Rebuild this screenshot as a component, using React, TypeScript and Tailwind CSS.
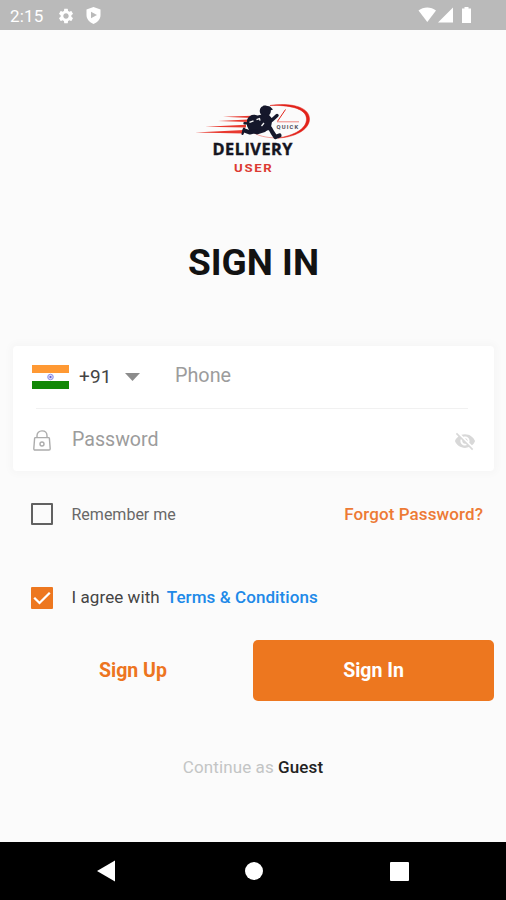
import { useState } from 'react';
import { MdSettings, MdVisibilityOff } from 'react-icons/md';

function StatusBar() {
  return (
    <div className="flex h-[30px] items-center bg-[#bababa] pl-[10px] text-white">
      <span className="w-[47px] pt-[2px] text-[17px] leading-5 tracking-[0.2px]">2:15</span>
      <MdSettings className="mt-[1px] h-[18px] w-[18px]" />
      <svg className="mt-[1px] ml-[11px]" width="15" height="17" viewBox="0 0 15 17">
        <path d="M7.5 0 L14.5 2.5 V8 C14.5 12 11.5 15.5 7.5 17 C3.5 15.5 .5 12 .5 8 V2.5 Z" fill="#fff" />
        <path d="M5 4.8 L11 8 L5 11.2 Z" fill="#bababa" />
      </svg>
      <svg className="ml-auto mr-[33px]" width="55" height="18" viewBox="0 0 55 18">
        <path d="M0.5 4.5 C5.5 0.5 13 0.5 18 4.5 L9.3 16 Z" fill="#fff" />
        <path d="M35 1.5 V16.5 H20 Z" fill="#fff" />
        <path d="M46.5 2.5 V1 H50.5 V2.5 H53 V17 H44 V2.5 Z" fill="#fff" />
      </svg>
    </div>
  );
}

function Logo() {
  return (
    <svg width="130" height="85" viewBox="0 0 130 85">
      {/* speed lines */}
      <g fill="#e8392f">
        <path d="M33 21.8 L62 20.8 V23 Z" />
        <path d="M28 26 L58 24.6 V27 Z" />
        <path d="M15 31.8 L56 29.8 V32.6 Z" />
        <path d="M5 37.4 L54 35 V38.4 Z" />
      </g>
      {/* clock ring */}
      <path
        d="M80 10.5 C98 7.5 119.5 11 119.5 24 C119.5 35 104 42.5 88 43 C104 40.5 116.5 34 116.5 24 C116.5 13 98 9.8 80 10.5 Z"
        fill="#e2231a"
        stroke="#e2231a"
        strokeWidth=".5"
      />
      <path d="M63 37 C68 41 76 42.5 84 42.8" fill="none" stroke="#e2231a" strokeWidth=".7" opacity=".6" />
      <path d="M87.5 26.3 L95.5 14.5" fill="none" stroke="#e2231a" strokeWidth="1" />
      <path d="M87 26.8 H109" fill="none" stroke="#e2231a" strokeWidth=".9" opacity=".6" />
      <text
        x="86.5"
        y="34.3"
        textLength="23"
        lengthAdjust="spacingAndGlyphs"
        className="font-['Roboto'] text-[5px] font-bold tracking-[1px]"
        fill="#50505a"
      >
        QUICK
      </text>
      {/* courier */}
      <g fill="#15172b">
        <circle cx="75.3" cy="16" r="5.6" />
        <path d="M73 10.5 L80 11.4 L83 14.4 L79 16 Z" />
        <path d="M57 25 C58.5 20.5 63 18.5 67.5 20.5 L72 19.5 L79 20 L82.5 24 L81 32 L75 37 L67 39.5 L60 37 L57 31 Z" />
      </g>
      <g fill="none" stroke="#15172b" strokeLinecap="round" strokeLinejoin="round">
        <path d="M78 23 L81.5 25.5 L87 20.5" strokeWidth="3.4" />
        <path d="M72 34 L80 33 L82.5 37.5 L85.5 42 L89.5 40.5" strokeWidth="4.2" />
        <path d="M66 36 L60 37.5 L54.5 35.5" strokeWidth="4" />
        <path d="M54 33.5 L52.5 39" strokeWidth="2.2" />
        <path d="M61 28.5 L54.5 28.2" strokeWidth="2.4" />
      </g>
      <path
        d="M59.5 27.4 L63.5 25.8 M66.5 24.6 L69.5 23.6 L70 25.6 M71.5 31 L74 28"
        fill="none"
        stroke="#f3f3f3"
        strokeWidth="1.3"
      />
      <text
        x="22.5"
        y="60"
        textLength="80.5"
        lengthAdjust="spacingAndGlyphs"
        className="font-['Open_Sans'] text-[16.2px] font-bold tracking-[0.5px]"
        fill="#15151f"
        stroke="#15151f"
        strokeWidth=".4"
      >
        DELIVERY
      </text>
      <text
        x="44"
        y="77.4"
        textLength="39.5"
        lengthAdjust="spacingAndGlyphs"
        className="font-['Roboto'] text-[11.8px] font-bold tracking-[1.5px]"
        fill="#dc3a32"
      >
        USER
      </text>
    </svg>
  );
}

function IndiaFlag() {
  return (
    <svg width="37" height="24" viewBox="0 0 37 24">
      <rect width="37" height="24" fill="#fff" />
      <rect width="37" height="8" fill="#ff9933" />
      <rect y="16" width="37" height="8" fill="#128807" />
      <circle cx="18.5" cy="12" r="2.8" fill="#d4d4fa" stroke="#7d7de0" strokeWidth=".8" />
      <circle cx="18.5" cy="12" r="1.1" fill="#5a5ad0" />
    </svg>
  );
}

function LockIcon() {
  return (
    <svg width="18" height="21" viewBox="0 0 18 21" fill="none" stroke="#acacac" strokeWidth="1.4">
      <path d="M2.4 7.6 H15.6 Q16.3 7.6 16.4 8.4 L17.2 18.8 Q17.2 20 16 20 H2 Q.8 20 .8 18.8 L1.6 8.4 Q1.7 7.6 2.4 7.6 Z" />
      <path d="M4 7.6 V5.8 C4 2.8 6 .9 9 .9 C12 .9 14 2.8 14 5.8 V7.6" />
      <circle cx="9" cy="14" r="2" />
    </svg>
  );
}

function Checkbox({ checked, onChange }: { checked: boolean; onChange: () => void }) {
  return (
    <button
      role="checkbox"
      aria-checked={checked}
      onClick={onChange}
      className={
        checked
          ? 'flex h-[22px] w-[22px] items-center justify-center rounded-[1px] bg-[#ed771f]'
          : 'h-[22px] w-[22px] rounded-[1px] border-2 border-[#616161]'
      }
    >
      {checked && (
        <svg width="18" height="14" viewBox="0 0 18 14">
          <path d="M1.2 6.8 L6.5 12 L16.8 1.8" fill="none" stroke="#fff" strokeWidth="2.3" />
        </svg>
      )}
    </button>
  );
}

export default function App() {
  const [remember, setRemember] = useState(false);
  const [agree, setAgree] = useState(true);

  return (
    <div className="flex h-[900px] w-[506px] flex-col overflow-hidden bg-[#fbfbfb] font-['Roboto',sans-serif]">
      <StatusBar />

      <main className="flex flex-1 flex-col">
        <div className="mt-[65px] flex justify-center pl-1">
          <Logo />
        </div>

        <h1 className="mt-[59px] pl-px text-center text-[37px] leading-[48px] font-bold text-[#121212]">SIGN IN</h1>

        <div className="mt-[59px] mr-3 ml-[13px] h-[125px] rounded-[4px] bg-white shadow-[0_0_7px_4px_rgba(0,0,0,0.018)]">
          <div className="flex h-[62px] items-center pl-[19px]">
            <IndiaFlag />
            <span className="ml-[10px] w-[34px] text-[19px] tracking-[0.2px] text-[#444]">+91</span>
            <svg className="ml-3" width="15" height="8" viewBox="0 0 15 8">
              <path d="M0 0 H15 L7.5 8 Z" fill="#8c8c8c" />
            </svg>
            <input
              type="tel"
              placeholder="Phone"
              className="mb-[2px] ml-[35px] w-[280px] text-[19.8px] outline-none placeholder:text-[#9c9c9c]"
            />
          </div>
          <div className="mr-[26px] ml-[23px] h-px bg-[#f1f1f1]" />
          <div className="flex h-[62px] items-center pl-5">
            <LockIcon />
            <input
              type="password"
              placeholder="Password"
              className="mb-px ml-[21px] w-[360px] text-[19.6px] outline-none placeholder:text-[#9c9c9c]"
            />
            <MdVisibilityOff className="mt-[2px] ml-[22px] h-[22px] w-[22px] text-[#d8d8d8]" />
          </div>
        </div>

        <div className="mt-[31px] mr-[23px] ml-[31px] flex h-6 items-center">
          <Checkbox checked={remember} onChange={() => setRemember(!remember)} />
          <span className="ml-[18.5px] pt-px text-[16px] text-[#686868]">Remember me</span>
          <a className="ml-auto pt-[2px] text-[17px] font-medium tracking-[0.1px] text-[#ed7a35]">Forgot Password?</a>
        </div>

        <div className="mt-[60px] ml-[31px] flex h-6 items-center">
          <Checkbox checked={agree} onChange={() => setAgree(!agree)} />
          <span className="ml-[18.5px] text-[17px] tracking-[0.08px] text-[#444]">I agree with</span>
          <a className="ml-[7px] text-[17px] font-medium tracking-[0.08px] text-[#2089e8]">Terms &amp; Conditions</a>
        </div>

        <div className="mt-[30px] mr-3 ml-[13px] flex h-[61px]">
          <button className="flex-1 pt-px text-[19.5px] font-bold text-[#ed7420]">Sign Up</button>
          <button className="w-[241px] rounded-[5px] bg-[#ed771f] pt-px text-[19.5px] font-bold text-white">Sign In</button>
        </div>

        <p className="mt-[54px] text-center text-[17px] leading-6 tracking-[0.1px] text-[#c3c5c5]">
          Continue as <a className="font-medium text-[#222]">Guest</a>
        </p>
      </main>

      <nav className="flex h-[58px] items-center bg-black">
        <svg className="ml-[97px]" width="18" height="22" viewBox="0 0 18 22">
          <path d="M0 11 L18 0.5 V21.5 Z" fill="#fff" />
        </svg>
        <div className="ml-[129.5px] h-[18px] w-[18px] rounded-full bg-white" />
        <div className="ml-[127px] h-[19px] w-[19px] rounded-[1px] bg-white" />
      </nav>
    </div>
  );
}
